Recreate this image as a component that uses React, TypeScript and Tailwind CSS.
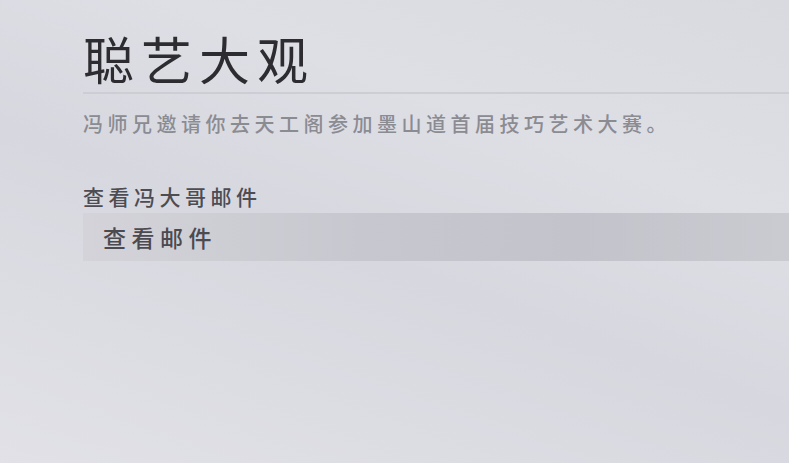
import React from "react";

// 任务详情面板 (邀请信)
export default function App() {
  return (
    <div
      className="w-[789px] h-[463px] overflow-hidden bg-[linear-gradient(200deg,#d9d9e0_0%,#dedee5_30%,#d7d8df_55%,#e1e1e7_100%)]"
      style={{ fontFamily: '"Noto Sans CJK SC", "Noto Sans", sans-serif' }}
    >
      <div className="pl-[83px] pt-[28px]">
        <h1 className="text-[51px] leading-[60px] tracking-[7px] text-[#2c2c31] font-normal">聪艺大观</h1>
        <div className="mt-[4px] h-[2px] bg-[#cdcdd4]" />
        <p className="mt-[16px] text-[20px] leading-[28px] tracking-[4.5px] text-[#8b8b92] font-medium">
          冯师兄邀请你去天工阁参加墨山道首届技巧艺术大赛。
        </p>
        <div className="mt-[44px] text-[21px] leading-[28px] tracking-[4.5px] text-[#4c4c52] font-medium">查看冯大哥邮件</div>
        <button
          type="button"
          className="mt-[3px] w-full h-[48px] flex items-center pl-[20px] text-left bg-[linear-gradient(90deg,#d3d3d9_0%,#c7c7cf_40%,#c3c3cb_70%,#cacad1_100%)]"
        >
          <span className="text-[23px] tracking-[5.5px] text-[#4a4a50] font-medium">查看邮件</span>
        </button>
      </div>
    </div>
  );
}
